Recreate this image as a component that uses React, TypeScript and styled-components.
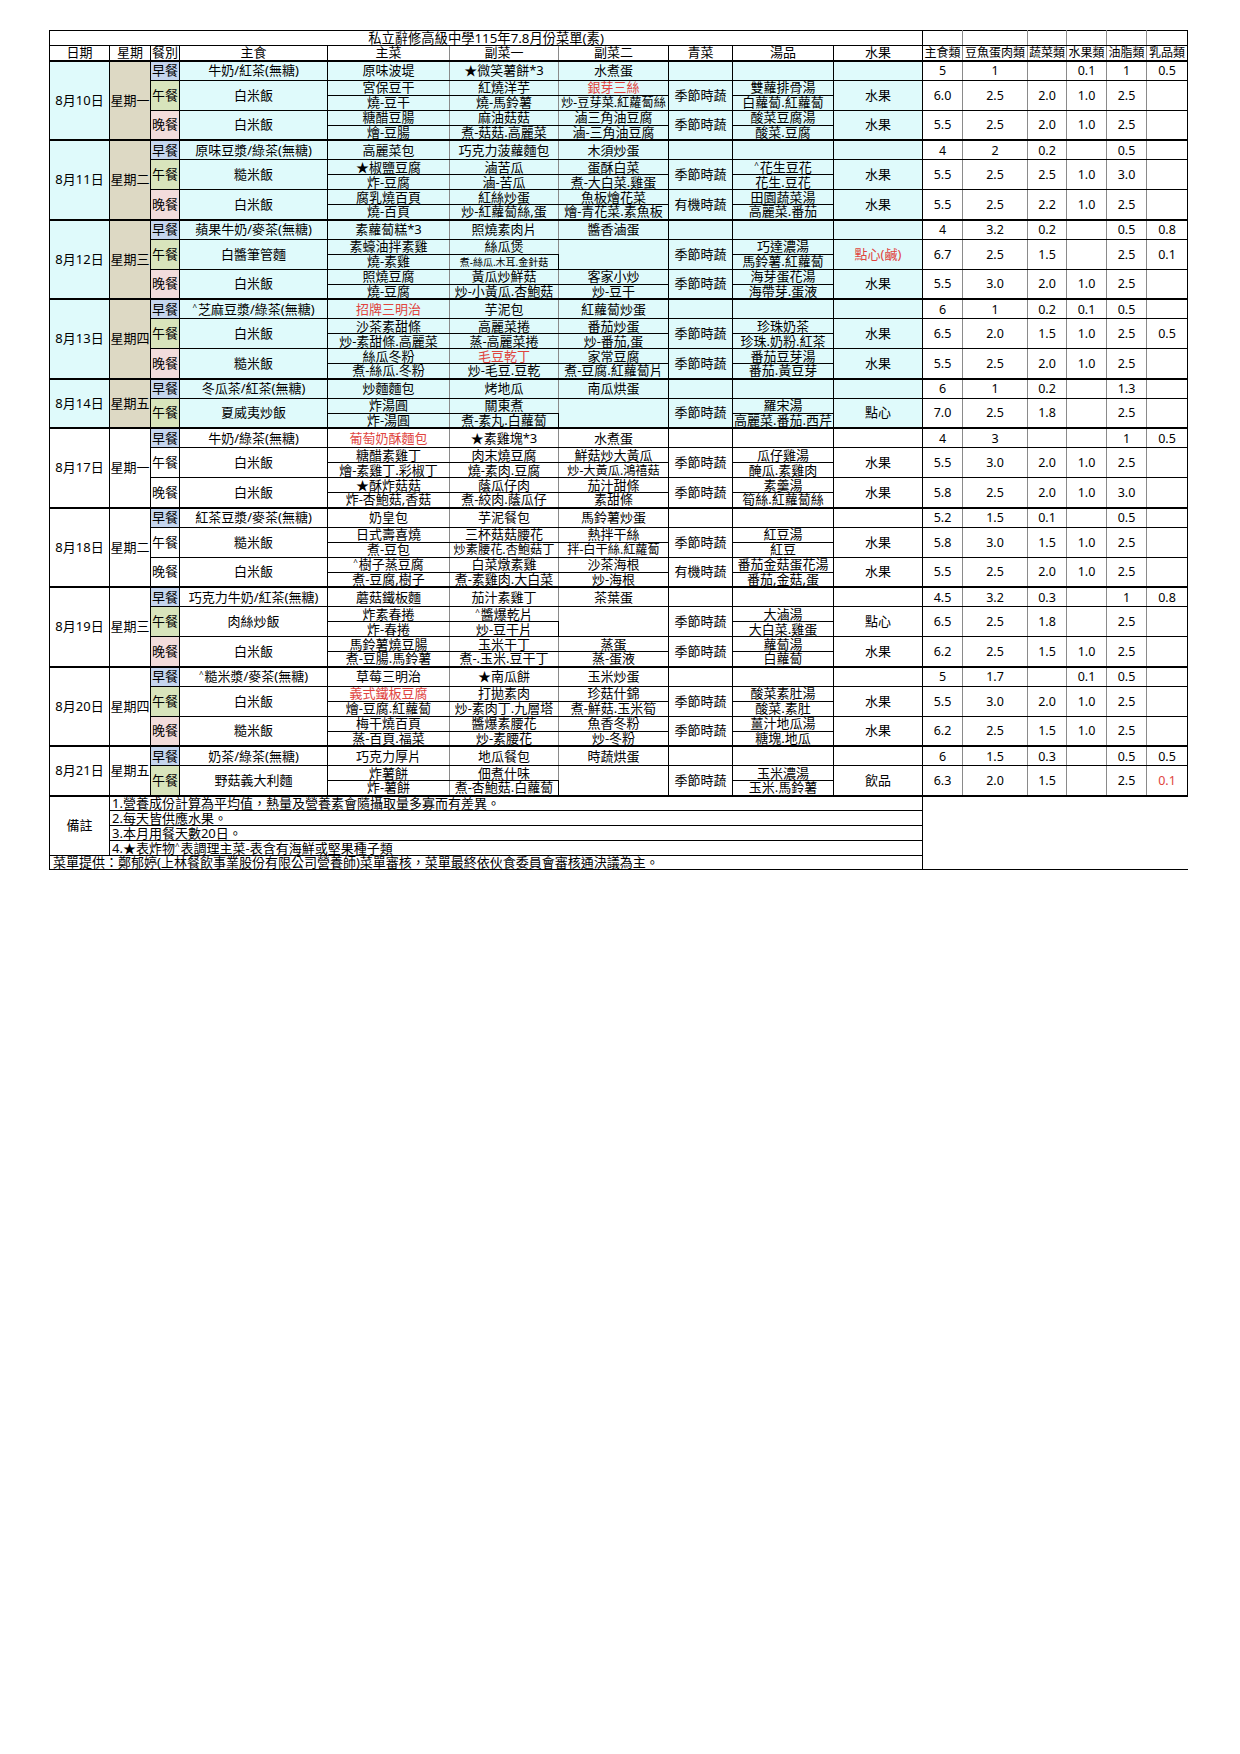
import React from 'react';
import styled, { createGlobalStyle, css } from 'styled-components';

const CYAN = '#dffafb';
const TAN = '#ddd9c4';
const BLUE = '#c5d5ee';
const GREEN = '#d8e4bc';
const PINK = '#f2dcdb';
const WHITE = '#ffffff';
const RED = '#e0443e';
const GRAY = '#8a8a8a';

const FONT = '"Noto Sans", "Noto Sans CJK TC", sans-serif';

const Global = createGlobalStyle`
  html, body { margin: 0; padding: 0; background: #fff; }
  body { font-family: ${FONT}; color: #000; }
`;

const Page = styled.div`
  width: 1240px;
  min-height: 1754px;
  box-sizing: border-box;
  padding: 30px 0 0 49px;
`;

const Sheet = styled.table`
  border-collapse: collapse;
  table-layout: fixed;
  width: 1138px;
  font-family: ${FONT};
  font-size: 13px;
`;

const base = css`
  border: 1px solid #000;
  padding: 0;
  text-align: center;
  vertical-align: middle;
  white-space: nowrap;
  line-height: 13px;
`;

type BgProps = { $bg?: string; $gray?: boolean; $red?: boolean };

const TitleRow = styled.tr`height: 15px;`;
const HeadRow = styled.tr`height: 15px;`;
const BreakfastRow = styled.tr`
  height: 19.5px;
  & > td { border-top: 2px solid #000; }
`;
const SubRow = styled.tr`height: 15px;`;
const NoteRow = styled.tr<{ $first?: boolean }>`
  height: 15px;
  ${(p) => p.$first && css`& > td { border-top: 2px solid #000; }`}
`;
const ProviderRow = styled.tr`height: 13.5px;`;

const TitleCell = styled.td`
  ${base};
  font-size: 13.3px;
`;

const HeadCell = styled.td<BgProps & { $small?: boolean }>`
  ${base};
  font-size: ${(p) => (p.$small ? '12px' : '13px')};
  ${(p) => p.$gray && css`border-right-color: ${GRAY};`}
`;

const DateCell = styled.td<BgProps>`
  ${base};
  background: ${(p) => p.$bg};
`;

const WeekCell = styled.td<BgProps>`
  ${base};
  background: ${(p) => p.$bg};
`;

const MealCell = styled.td<BgProps>`
  ${base};
  background: ${(p) => p.$bg};
`;

const FoodCell = styled.td<BgProps>`
  ${base};
  background: ${(p) => p.$bg};
  color: ${(p) => (p.$red ? RED : '#000')};
  ${(p) => p.$gray && css`border-right-color: ${GRAY};`}
`;

const NutCell = styled.td<BgProps>`
  ${base};
  font-size: 12.5px;
  color: ${(p) => (p.$red ? RED : '#000')};
  ${(p) => p.$gray && css`border-right-color: ${GRAY};`}
`;

const NoteLabel = styled.td`
  ${base};
`;

const NoteText = styled.td`
  ${base};
  text-align: left;
  padding-left: 2px;
`;

const ProviderCell = styled.td`
  ${base};
  text-align: left;
  padding-left: 3px;
`;

const Filler = styled.td`
  border: none;
  border-left: 1px solid #000;
  border-bottom: 1px solid #000;
  padding: 0;
`;

const Label = styled.span<{ $red?: boolean; $size?: string }>`
  color: ${(p) => (p.$red ? RED : 'inherit')};
  font-size: ${(p) => p.$size ?? 'inherit'};
  line-height: 13px;
`;

const Mark = styled.span`
  font-size: 8px;
  vertical-align: 4px;
  line-height: 0;
  margin-right: 1px;
`;

/* prefixes: ! red, ~ shrunk small, % slightly tight, ^ triangle mark */
const Txt = ({ s }: { s: string }) => {
  let red = false;
  let size: string | undefined;
  let mark = false;
  let str = s;
  while (str.length && '!~%^'.includes(str[0])) {
    if (str[0] === '!') red = true;
    if (str[0] === '~') size = '10px';
    if (str[0] === '%') size = '12.2px';
    if (str[0] === '^') mark = true;
    str = str.slice(1);
  }
  return (
    <Label $red={red} $size={size}>
      {mark && <Mark>^</Mark>}
      {str}
    </Label>
  );
};

type Pair = [string, string];
interface Breakfast {
  staple: string;
  main: string;
  side1: string;
  side2: string;
  nut: string[];
}
interface Meal {
  staple: string;
  main: Pair;
  side1: Pair;
  side2: Pair | null;
  veg: string;
  soup: Pair;
  fruit: string;
  nut: string[];
}
interface Day {
  date: string;
  week: string;
  wk1: boolean;
  lunchBg: string;
  dinnerBg: string;
  b: Breakfast;
  l: Meal;
  d?: Meal;
}

const days: Day[] = [
  {
    date: '8月10日', week: '星期一', wk1: true, lunchBg: GREEN, dinnerBg: PINK,
    b: { staple: '牛奶/紅茶(無糖)', main: '原味波堤', side1: '★微笑薯餅*3', side2: '水煮蛋', nut: ['5', '1', '', '0.1', '1', '0.5'] },
    l: { staple: '白米飯', main: ['宮保豆干', '燒-豆干'], side1: ['紅燒洋芋', '燒-馬鈴薯'], side2: ['!銀芽三絲', '%炒-豆芽菜.紅蘿蔔絲'], veg: '季節時蔬', soup: ['雙蘿排骨湯', '白蘿蔔.紅蘿蔔'], fruit: '水果', nut: ['6.0', '2.5', '2.0', '1.0', '2.5', ''] },
    d: { staple: '白米飯', main: ['糖醋豆腸', '燴-豆腸'], side1: ['麻油菇菇', '煮-菇菇.高麗菜'], side2: ['滷三角油豆腐', '滷-三角油豆腐'], veg: '季節時蔬', soup: ['酸菜豆腐湯', '酸菜.豆腐'], fruit: '水果', nut: ['5.5', '2.5', '2.0', '1.0', '2.5', ''] },
  },
  {
    date: '8月11日', week: '星期二', wk1: true, lunchBg: GREEN, dinnerBg: PINK,
    b: { staple: '原味豆漿/綠茶(無糖)', main: '高麗菜包', side1: '巧克力菠蘿麵包', side2: '木須炒蛋', nut: ['4', '2', '0.2', '', '0.5', ''] },
    l: { staple: '糙米飯', main: ['★椒鹽豆腐', '炸-豆腐'], side1: ['滷苦瓜', '滷-苦瓜'], side2: ['蛋酥白菜', '煮-大白菜.雞蛋'], veg: '季節時蔬', soup: ['^花生豆花', '花生.豆花'], fruit: '水果', nut: ['5.5', '2.5', '2.5', '1.0', '3.0', ''] },
    d: { staple: '白米飯', main: ['腐乳燒百頁', '燒-百頁'], side1: ['紅絲炒蛋', '炒-紅蘿蔔絲,蛋'], side2: ['魚板燴花菜', '燴-青花菜.素魚板'], veg: '有機時蔬', soup: ['田園蔬菜湯', '高麗菜.番茄'], fruit: '水果', nut: ['5.5', '2.5', '2.2', '1.0', '2.5', ''] },
  },
  {
    date: '8月12日', week: '星期三', wk1: true, lunchBg: GREEN, dinnerBg: PINK,
    b: { staple: '蘋果牛奶/麥茶(無糖)', main: '素蘿蔔糕*3', side1: '照燒素肉片', side2: '醬香滷蛋', nut: ['4', '3.2', '0.2', '', '0.5', '0.8'] },
    l: { staple: '白醬筆管麵', main: ['素蠔油拌素雞', '燒-素雞'], side1: ['絲瓜煲', '~煮-絲瓜.木耳.金針菇'], side2: null, veg: '季節時蔬', soup: ['巧達濃湯', '馬鈴薯.紅蘿蔔'], fruit: '!點心(鹹)', nut: ['6.7', '2.5', '1.5', '', '2.5', '0.1'] },
    d: { staple: '白米飯', main: ['照燒豆腐', '燒-豆腐'], side1: ['黃瓜炒鮮菇', '炒-小黃瓜.杏鮑菇'], side2: ['客家小炒', '炒-豆干'], veg: '季節時蔬', soup: ['海芽蛋花湯', '海帶芽.蛋液'], fruit: '水果', nut: ['5.5', '3.0', '2.0', '1.0', '2.5', ''] },
  },
  {
    date: '8月13日', week: '星期四', wk1: true, lunchBg: GREEN, dinnerBg: PINK,
    b: { staple: '^芝麻豆漿/綠茶(無糖)', main: '!招牌三明治', side1: '芋泥包', side2: '紅蘿蔔炒蛋', nut: ['6', '1', '0.2', '0.1', '0.5', ''] },
    l: { staple: '白米飯', main: ['沙茶素甜條', '炒-素甜條.高麗菜'], side1: ['高麗菜捲', '蒸-高麗菜捲'], side2: ['番茄炒蛋', '炒-番茄,蛋'], veg: '季節時蔬', soup: ['珍珠奶茶', '珍珠.奶粉.紅茶'], fruit: '水果', nut: ['6.5', '2.0', '1.5', '1.0', '2.5', '0.5'] },
    d: { staple: '糙米飯', main: ['絲瓜冬粉', '煮-絲瓜.冬粉'], side1: ['!毛豆乾丁', '炒-毛豆.豆乾'], side2: ['家常豆腐', '煮-豆腐.紅蘿蔔片'], veg: '季節時蔬', soup: ['番茄豆芽湯', '番茄.黃豆芽'], fruit: '水果', nut: ['5.5', '2.5', '2.0', '1.0', '2.5', ''] },
  },
  {
    date: '8月14日', week: '星期五', wk1: true, lunchBg: GREEN, dinnerBg: PINK,
    b: { staple: '冬瓜茶/紅茶(無糖)', main: '炒麵麵包', side1: '烤地瓜', side2: '南瓜烘蛋', nut: ['6', '1', '0.2', '', '1.3', ''] },
    l: { staple: '夏威夷炒飯', main: ['炸湯圓', '炸-湯圓'], side1: ['關東煮', '煮-素丸.白蘿蔔'], side2: null, veg: '季節時蔬', soup: ['羅宋湯', '高麗菜.番茄.西芹'], fruit: '點心', nut: ['7.0', '2.5', '1.8', '', '2.5', ''] },
  },
  {
    date: '8月17日', week: '星期一', wk1: false, lunchBg: WHITE, dinnerBg: WHITE,
    b: { staple: '牛奶/綠茶(無糖)', main: '!葡萄奶酥麵包', side1: '★素雞塊*3', side2: '水煮蛋', nut: ['4', '3', '', '', '1', '0.5'] },
    l: { staple: '白米飯', main: ['糖醋素雞丁', '燴-素雞丁.彩椒丁'], side1: ['肉末燒豆腐', '燒-素肉.豆腐'], side2: ['鮮菇炒大黃瓜', '%炒-大黃瓜.鴻禧菇'], veg: '季節時蔬', soup: ['瓜仔雞湯', '醃瓜.素雞肉'], fruit: '水果', nut: ['5.5', '3.0', '2.0', '1.0', '2.5', ''] },
    d: { staple: '白米飯', main: ['★酥炸菇菇', '炸-杏鮑菇,香菇'], side1: ['蔭瓜仔肉', '煮-絞肉.蔭瓜仔'], side2: ['茄汁甜條', '素甜條'], veg: '季節時蔬', soup: ['素羹湯', '筍絲.紅蘿蔔絲'], fruit: '水果', nut: ['5.8', '2.5', '2.0', '1.0', '3.0', ''] },
  },
  {
    date: '8月18日', week: '星期二', wk1: false, lunchBg: WHITE, dinnerBg: WHITE,
    b: { staple: '紅茶豆漿/麥茶(無糖)', main: '奶皇包', side1: '芋泥餐包', side2: '馬鈴薯炒蛋', nut: ['5.2', '1.5', '0.1', '', '0.5', ''] },
    l: { staple: '糙米飯', main: ['日式壽喜燒', '煮-豆包'], side1: ['三杯菇菇腰花', '%炒素腰花.杏鮑菇丁'], side2: ['熱拌干絲', '%拌-白干絲.紅蘿蔔'], veg: '季節時蔬', soup: ['紅豆湯', '紅豆'], fruit: '水果', nut: ['5.8', '3.0', '1.5', '1.0', '2.5', ''] },
    d: { staple: '白米飯', main: ['^樹子蒸豆腐', '煮-豆腐,樹子'], side1: ['白菜燉素雞', '煮-素雞肉.大白菜'], side2: ['沙茶海根', '炒-海根'], veg: '有機時蔬', soup: ['番茄金菇蛋花湯', '番茄,金菇,蛋'], fruit: '水果', nut: ['5.5', '2.5', '2.0', '1.0', '2.5', ''] },
  },
  {
    date: '8月19日', week: '星期三', wk1: false, lunchBg: GREEN, dinnerBg: PINK,
    b: { staple: '巧克力牛奶/紅茶(無糖)', main: '蘑菇鐵板麵', side1: '茄汁素雞丁', side2: '茶葉蛋', nut: ['4.5', '3.2', '0.3', '', '1', '0.8'] },
    l: { staple: '肉絲炒飯', main: ['炸素春捲', '炸-春捲'], side1: ['^醬爆乾片', '炒-豆干片'], side2: null, veg: '季節時蔬', soup: ['大滷湯', '大白菜.雞蛋'], fruit: '點心', nut: ['6.5', '2.5', '1.8', '', '2.5', ''] },
    d: { staple: '白米飯', main: ['馬鈴薯燒豆腸', '煮-豆腸.馬鈴薯'], side1: ['玉米干丁', '煮-.玉米.豆干丁'], side2: ['蒸蛋', '蒸-蛋液'], veg: '季節時蔬', soup: ['蘿蔔湯', '白蘿蔔'], fruit: '水果', nut: ['6.2', '2.5', '1.5', '1.0', '2.5', ''] },
  },
  {
    date: '8月20日', week: '星期四', wk1: false, lunchBg: GREEN, dinnerBg: PINK,
    b: { staple: '^糙米漿/麥茶(無糖)', main: '草莓三明治', side1: '★南瓜餅', side2: '玉米炒蛋', nut: ['5', '1.7', '', '0.1', '0.5', ''] },
    l: { staple: '白米飯', main: ['!義式鐵板豆腐', '燴-豆腐.紅蘿蔔'], side1: ['打拋素肉', '炒-素肉丁.九層塔'], side2: ['珍菇什錦', '煮-鮮菇.玉米筍'], veg: '季節時蔬', soup: ['酸菜素肚湯', '酸菜.素肚'], fruit: '水果', nut: ['5.5', '3.0', '2.0', '1.0', '2.5', ''] },
    d: { staple: '糙米飯', main: ['梅干燒百頁', '蒸-百頁.福菜'], side1: ['醬爆素腰花', '炒-素腰花'], side2: ['魚香冬粉', '炒-冬粉'], veg: '季節時蔬', soup: ['薑汁地瓜湯', '糖塊.地瓜'], fruit: '水果', nut: ['6.2', '2.5', '1.5', '1.0', '2.5', ''] },
  },
  {
    date: '8月21日', week: '星期五', wk1: false, lunchBg: GREEN, dinnerBg: PINK,
    b: { staple: '奶茶/綠茶(無糖)', main: '巧克力厚片', side1: '地瓜餐包', side2: '時蔬烘蛋', nut: ['6', '1.5', '0.3', '', '0.5', '0.5'] },
    l: { staple: '野菇義大利麵', main: ['炸薯餅', '炸-薯餅'], side1: ['佃煮什味', '煮-杏鮑菇.白蘿蔔'], side2: null, veg: '季節時蔬', soup: ['玉米濃湯', '玉米.馬鈴薯'], fruit: '飲品', nut: ['6.3', '2.0', '1.5', '', '2.5', '!0.1'] },
  },
];

const widths = [60, 41, 29, 148, 122, 109, 110, 64, 101, 89, 40, 65, 39, 40, 40, 41];
const heads = ['日期', '星期', '餐別', '主食', '主菜', '副菜一', '副菜二', '青菜', '湯品', '水果'];
const nutHeads = ['主食類', '豆魚蛋肉類', '蔬菜類', '水果類', '油脂類', '乳品類'];

const Nuts = ({ values, span }: { values: string[]; span?: number }) => (
  <>
    {values.map((v, i) => {
      const red = v.startsWith('!');
      return (
        <NutCell key={i} rowSpan={span} $gray={i < 5} $red={red}>
          {red ? v.slice(1) : v}
        </NutCell>
      );
    })}
  </>
);

const MealRows = ({ name, bg, m, fill }: { name: string; bg: string; m: Meal; fill: string }) => (
  <>
    <SubRow>
      <MealCell rowSpan={2} $bg={bg}>{name}</MealCell>
      <FoodCell rowSpan={2} $bg={fill}><Txt s={m.staple} /></FoodCell>
      <FoodCell $bg={fill} $gray><Txt s={m.main[0]} /></FoodCell>
      <FoodCell $bg={fill} $gray><Txt s={m.side1[0]} /></FoodCell>
      {m.side2 ? (
        <FoodCell $bg={fill}><Txt s={m.side2[0]} /></FoodCell>
      ) : (
        <FoodCell rowSpan={2} $bg={fill} />
      )}
      <FoodCell rowSpan={2} $bg={fill}>{m.veg}</FoodCell>
      <FoodCell $bg={fill}><Txt s={m.soup[0]} /></FoodCell>
      <FoodCell rowSpan={2} $bg={fill}><Txt s={m.fruit} /></FoodCell>
      <Nuts values={m.nut} span={2} />
    </SubRow>
    <SubRow>
      <FoodCell $bg={fill} $gray><Txt s={m.main[1]} /></FoodCell>
      <FoodCell $bg={fill} $gray><Txt s={m.side1[1]} /></FoodCell>
      {m.side2 && <FoodCell $bg={fill}><Txt s={m.side2[1]} /></FoodCell>}
      <FoodCell $bg={fill}><Txt s={m.soup[1]} /></FoodCell>
    </SubRow>
  </>
);

const DayBlock = ({ day }: { day: Day }) => {
  const fill = day.wk1 ? CYAN : WHITE;
  const span = day.d ? 5 : 3;
  const b = day.b;
  return (
    <>
      <BreakfastRow>
        <DateCell rowSpan={span} $bg={fill}>{day.date}</DateCell>
        <WeekCell rowSpan={span} $bg={day.wk1 ? TAN : WHITE}>{day.week}</WeekCell>
        <MealCell $bg={BLUE}>早餐</MealCell>
        <FoodCell $bg={fill}><Txt s={b.staple} /></FoodCell>
        <FoodCell $bg={fill} $gray><Txt s={b.main} /></FoodCell>
        <FoodCell $bg={fill} $gray><Txt s={b.side1} /></FoodCell>
        <FoodCell $bg={fill}><Txt s={b.side2} /></FoodCell>
        <FoodCell $bg={fill} />
        <FoodCell $bg={fill} />
        <FoodCell $bg={fill} />
        <Nuts values={b.nut} />
      </BreakfastRow>
      <MealRows name="午餐" bg={day.lunchBg} m={day.l} fill={fill} />
      {day.d && <MealRows name="晚餐" bg={day.dinnerBg} m={day.d} fill={fill} />}
    </>
  );
};

const notes = [
  '1.營養成份計算為平均值，熱量及營養素會隨攝取量多寡而有差異。',
  '2.每天皆供應水果。',
  '3.本月用餐天數20日。',
  '4.★表炸物^表調理主菜-表含有海鮮或堅果種子類',
];

const NoteLine = ({ s }: { s: string }) => {
  const parts = s.split('^');
  return (
    <>
      {parts.map((p, i) => (
        <React.Fragment key={i}>
          {i > 0 && <Mark>^</Mark>}
          {p}
        </React.Fragment>
      ))}
    </>
  );
};

export default function App() {
  return (
    <Page>
      <Global />
      <Sheet>
        <colgroup>
          {widths.map((w, i) => (
            <col key={i} style={{ width: w }} />
          ))}
        </colgroup>
        <tbody>
          <TitleRow>
            <TitleCell colSpan={10}>私立辭修高級中學115年7.8月份菜單(素)</TitleCell>
            {nutHeads.map((_, i) => (
              <NutCell key={i} $gray={i < 5} />
            ))}
          </TitleRow>
          <HeadRow>
            {heads.map((h, i) => (
              <HeadCell key={h} $gray={i === 4 || i === 5}>{h}</HeadCell>
            ))}
            {nutHeads.map((h, i) => (
              <HeadCell key={h} $small $gray={i < 5}>{h}</HeadCell>
            ))}
          </HeadRow>
          {days.map((d) => (
            <DayBlock key={d.date} day={d} />
          ))}
          {notes.map((n, i) => (
            <NoteRow key={i} $first={i === 0}>
              {i === 0 && <NoteLabel rowSpan={4}>備註</NoteLabel>}
              <NoteText colSpan={9}><NoteLine s={n} /></NoteText>
              {i === 0 && <Filler rowSpan={5} colSpan={6} />}
            </NoteRow>
          ))}
          <ProviderRow>
            <ProviderCell colSpan={10}>
              菜單提供：鄭郁婷(上林餐飲事業股份有限公司營養師)菜單審核，菜單最終依伙食委員會審核通決議為主。
            </ProviderCell>
          </ProviderRow>
        </tbody>
      </Sheet>
    </Page>
  );
}
